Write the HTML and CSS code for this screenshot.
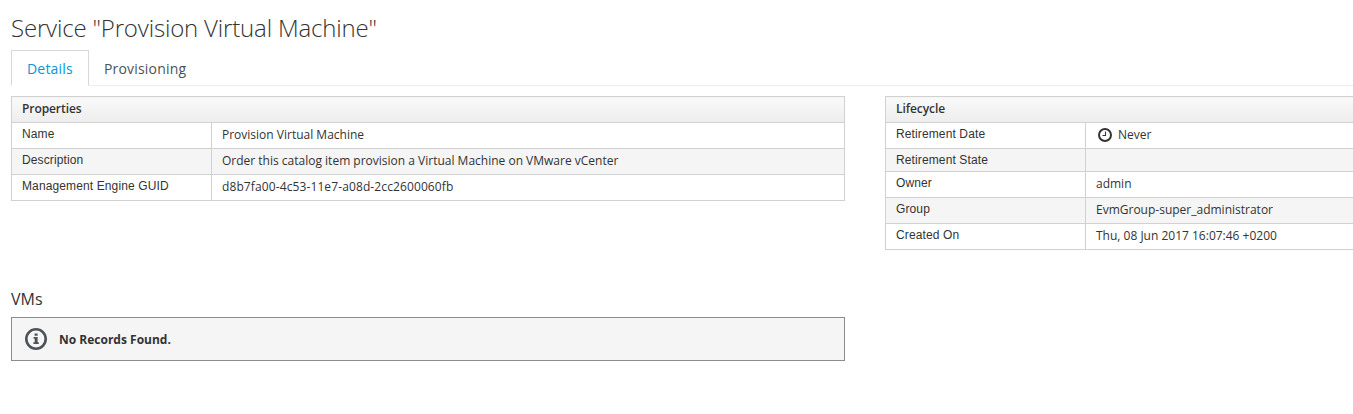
FILE: index.html
```html
<!DOCTYPE html>
<html lang="en">
<head>
<meta charset="utf-8">
<title>Service</title>
<link rel="stylesheet" href="styles.css">
</head>
<body>
<main class="page">
  <h1 class="title">Service "Provision Virtual Machine"</h1>
  <nav class="tabs">
    <a class="tab active">Details</a>
    <a class="tab">Provisioning</a>
  </nav>
  <div class="columns">
    <div class="left">
      <table class="props">
        <colgroup><col class="label-col"><col></colgroup>
        <thead><tr><th colspan="2">Properties</th></tr></thead>
        <tbody>
          <tr><td class="label">Name</td><td>Provision Virtual Machine</td></tr>
          <tr><td class="label">Description</td><td>Order this catalog item provision a Virtual Machine on VMware vCenter</td></tr>
          <tr><td class="label">Management Engine GUID</td><td class="guid">d8b7fa00-4c53-11e7-a08d-2cc2600060fb</td></tr>
        </tbody>
      </table>
    </div>
    <div class="right">
      <table class="props clipped">
        <colgroup><col class="label-col"><col></colgroup>
        <thead><tr><th colspan="2">Lifecycle</th></tr></thead>
        <tbody>
          <tr><td class="label">Retirement Date</td><td><span class="never"><svg class="clock" viewBox="0 0 14 14"><circle cx="7" cy="7" r="6" fill="none" stroke="#333" stroke-width="2"/><path d="M7.5 3.5v4H4.5" fill="none" stroke="#333" stroke-width="1.1"/></svg>Never</span></td></tr>
          <tr class="empty"><td class="label">Retirement State</td><td></td></tr>
          <tr><td class="label">Owner</td><td>admin</td></tr>
          <tr><td class="label">Group</td><td>EvmGroup-super_administrator</td></tr>
          <tr><td class="label">Created On</td><td class="date">Thu, 08 Jun 2017 16:07:46 +0200</td></tr>
        </tbody>
      </table>
    </div>
  </div>
  <section class="vms">
    <h3 class="subtitle">VMs</h3>
    <div class="alert">
      <svg class="info" viewBox="0 0 22 22"><circle cx="11" cy="11" r="9.7" fill="none" stroke="#4d5258" stroke-width="2.6"/><path d="M9.6 5.6h3v2.2h-3zM8.6 9h4v5.3h1.2v1.7H8.4v-1.7h1.3v-3.5H8.6z" fill="#4d5258"/></svg>
      <strong class="message">No Records Found.</strong>
    </div>
  </section>
</main>
</body>
</html>
```
FILE: styles.css
```css
* { box-sizing: border-box; }
body {
  margin: 0;
  background: #fff;
  color: #333;
  font: 12px/20px "Open Sans", sans-serif;
}
.page { padding: 15px 0 0 11px; }
.title {
  margin: 0 0 9px;
  font-size: 24px;
  line-height: 26px;
  font-weight: 300;
  letter-spacing: -0.17px;
}
.tabs {
  display: flex;
  height: 36px;
  border-bottom: 1px solid #ededed;
}
.tab {
  height: 36px;
  padding: 9px 15px 0;
  font-size: 14px;
  letter-spacing: 0.18px;
  color: #4d5258;
}
.tab.active {
  width: 78px;
  border: 1px solid #d8d8d8;
  border-bottom-color: #fff;
  padding-top: 8px;
  color: #0099d3;
  background: #fff;
}
.columns { display: flex; gap: 40px; height: 192px; padding-top: 10px; }
.left { width: 834px; flex: none; }
.right { flex: 1; min-width: 0; }
.props {
  width: 100%;
  border-collapse: collapse;
  table-layout: fixed;
}
.label-col { width: 200px; }
.props th {
  height: 26px;
  padding: 2px 10px 3px;
  text-align: left;
  font-weight: 600;
  letter-spacing: -0.08px;
  background: linear-gradient(#fafafa, #ededed);
  border: 1px solid #d1d1d1;
}
.props td {
  height: 26px;
  padding: 2px 10px 3px;
  vertical-align: top;
  border: 1px solid #d1d1d1;
}
.props.clipped th,
.props.clipped td:last-child { border-right: 0; }
.props tr:nth-child(even) td { background: #f5f5f5; }
.props .empty td { height: 23px; padding-bottom: 0; }
.props .label {
  padding-top: 1px;
  font-family: "Liberation Sans", Arial, sans-serif;
  letter-spacing: 0.12px;
}
.guid { letter-spacing: 0.11px; }
.never { display: flex; align-items: center; gap: 6px; padding-left: 2px; }
.clock { width: 14px; height: 14px; }
.subtitle { margin: 0 0 8px; font-size: 16px; line-height: 20px; font-weight: 400; }
.vms { width: 834px; padding-top: 11px; }
.alert {
  display: flex;
  align-items: center;
  gap: 12px;
  height: 44px;
  padding-left: 13px;
  border: 1px solid #8b8d8f;
  background: #f5f5f5;
}
.info { width: 22px; height: 22px; }
.message { padding-top: 2px; }
```
